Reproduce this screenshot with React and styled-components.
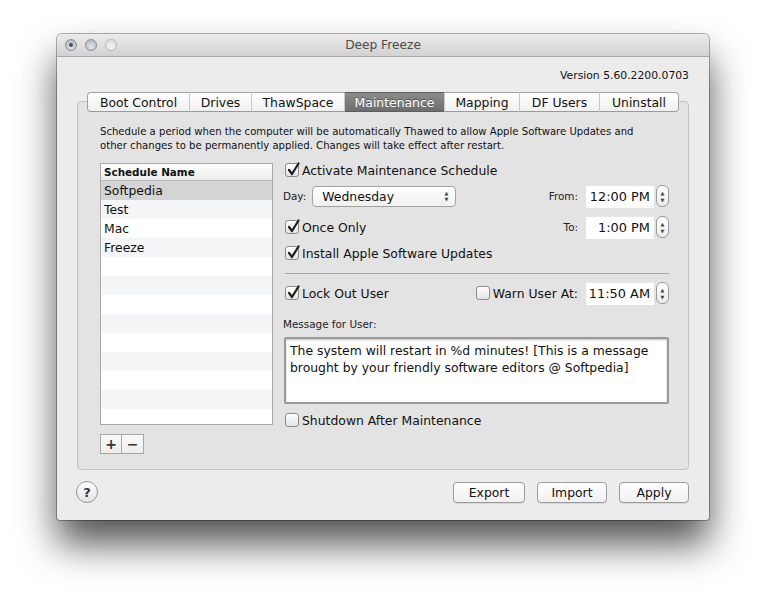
import React from "react";
import styled, { createGlobalStyle } from "styled-components";

const GlobalStyle = createGlobalStyle`
  html, body {
    margin: 0;
    padding: 0;
    background: #ffffff;
  }
  body {
    font-family: "DejaVu Sans", "Liberation Sans", sans-serif;
    color: #111;
  }
`;

const Page = styled.div`
  width: 766px;
  height: 600px;
  padding: 34px 0 0 57px;
  box-sizing: border-box;
  overflow: hidden;
`;

const Window = styled.div`
  width: 652px;
  height: 486px;
  background: #ececec;
  border-radius: 5px 5px 3px 3px;
  box-shadow: 0 0 0 1px rgba(0, 0, 0, 0.3), 0 24px 38px rgba(0, 0, 0, 0.68);
  display: flex;
  flex-direction: column;
  overflow: hidden;
`;

const TitleBar = styled.div`
  height: 22px;
  flex-shrink: 0;
  background: linear-gradient(#ebebeb, #d2d2d2);
  border-bottom: 1px solid #a8a8a8;
  display: flex;
  align-items: center;
  position: relative;
`;

const Lights = styled.div`
  display: flex;
  gap: 8px;
  padding-left: 8px;
`;

const Light = styled.span`
  width: 12px;
  height: 12px;
  border-radius: 50%;
  box-sizing: border-box;
  border: 1px solid ${(p) => (p.$faded ? "#b8b8b8" : "#8e8e94")};
  background: ${(p) =>
    p.$faded
      ? "radial-gradient(circle at 50% 70%, #f4f4f4, #d9d9d9)"
      : "radial-gradient(circle at 50% 70%, #e4e8ee, #a3aab4)"};
  display: flex;
  align-items: center;
  justify-content: center;

  &::after {
    content: "";
    width: 4px;
    height: 4px;
    border-radius: 50%;
    background: #4b4f56;
    display: ${(p) => (p.$dot ? "block" : "none")};
  }
`;

const Title = styled.div`
  position: absolute;
  left: 0;
  right: 0;
  top: 4px;
  text-align: center;
  font-size: 12.2px;
  color: #4a4a4a;
  pointer-events: none;
`;

const Body = styled.div`
  flex: 1;
  display: flex;
  flex-direction: column;
  padding: 0 20px;
`;

const VersionRow = styled.div`
  margin-top: 11px;
  height: 15px;
  line-height: 15px;
  text-align: right;
  font-size: 10.8px;
`;

const TabRow = styled.div`
  margin-top: 9px;
  margin-bottom: -11px;
  display: flex;
  justify-content: center;
  position: relative;
  z-index: 1;
`;

const Tab = styled.div`
  width: ${(p) => p.$w}px;
  height: 20px;
  box-sizing: border-box;
  display: flex;
  align-items: center;
  justify-content: center;
  font-size: 12.4px;
  border-top: 1px solid ${(p) => (p.$active ? "#5e5e5e" : "#a2a2a2")};
  border-bottom: 1px solid ${(p) => (p.$active ? "#5e5e5e" : "#9a9a9a")};
  border-left: 1px solid ${(p) => (p.$first ? "#a2a2a2" : "#c9c9c9")};
  border-right: ${(p) => (p.$last ? "1px solid #a2a2a2" : "none")};
  border-radius: ${(p) => (p.$first ? "4px 0 0 4px" : p.$last ? "0 4px 4px 0" : "0")};
  background: ${(p) =>
    p.$active
      ? "linear-gradient(#8c8c8c, #6d6d6d)"
      : "linear-gradient(#ffffff, #f0f0f0)"};
  color: ${(p) => (p.$active ? "#ffffff" : "#111")};
  text-shadow: ${(p) => (p.$active ? "0 -1px 0 rgba(0,0,0,0.35)" : "none")};
`;

const GroupBox = styled.div`
  background: #e3e3e3;
  border: 1px solid #c4c4c4;
  border-radius: 4px;
  padding: 23px 19px 15px 22px;
`;

const Intro = styled.p`
  margin: 0;
  font-size: 10.1px;
  line-height: 14px;
`;

const Main = styled.div`
  margin-top: 10px;
  display: flex;
  gap: 10px;
`;

const LeftCol = styled.div`
  display: flex;
  flex-direction: column;
  gap: 9px;
`;

const Table = styled.div`
  width: 173px;
  height: 262px;
  box-sizing: border-box;
  border: 1px solid #a9a9a9;
  background: #ffffff;
  overflow: hidden;
`;

const TableHead = styled.div`
  height: 17px;
  box-sizing: border-box;
  border-bottom: 1px solid #b9b9b9;
  background: linear-gradient(#ffffff, #ececec);
  font-size: 10.4px;
  font-weight: bold;
  padding-left: 3px;
  line-height: 16px;
`;

const TableRow = styled.div`
  height: 19px;
  line-height: 19px;
  padding-left: 3px;
  font-size: 12.4px;
  background: ${(p) => (p.$selected ? "#d4d4d4" : p.$odd ? "#f3f5f7" : "#ffffff")};
`;

const PlusMinus = styled.div`
  display: flex;
`;

const SmallButton = styled.div`
  width: 22px;
  height: 20px;
  box-sizing: border-box;
  border: 1px solid #a6a6a6;
  border-left: ${(p) => (p.$joined ? "none" : "1px solid #a6a6a6")};
  background: linear-gradient(#fbfbfb, #ececec);
  display: flex;
  align-items: center;
  justify-content: center;
  font-size: 14px;
  font-weight: bold;
  color: #333;
`;

const RightCol = styled.div`
  width: 386px;
  display: flex;
  flex-direction: column;
`;

const Row = styled.div`
  height: ${(p) => p.$h || 18}px;
  margin-top: ${(p) => p.$mt || 0}px;
  display: flex;
  align-items: center;
  font-size: 12.4px;
`;

const CheckLabel = styled.label`
  display: flex;
  align-items: center;
  gap: 3px;
  margin-left: ${(p) => (p.$auto ? "auto" : "2px")};
`;

const Box = styled.span`
  width: 14px;
  height: 14px;
  box-sizing: border-box;
  border: 1px solid #8b8b8b;
  border-radius: 3px;
  background: linear-gradient(#ffffff, #e4e4e4);
  position: relative;
  flex-shrink: 0;

  svg {
    position: absolute;
    left: 0px;
    top: -3px;
  }
`;

const SmallLabel = styled.span`
  font-size: 10.4px;
  color: #222;
`;

const Popup = styled.div`
  margin-left: 6px;
  width: 144px;
  height: 21px;
  box-sizing: border-box;
  border: 1px solid #a3a3a3;
  border-radius: 4px;
  background: linear-gradient(#ffffff, #f0f0f0);
  display: flex;
  align-items: center;
  padding: 0 7px 0 9px;
  font-size: 12.4px;
  justify-content: space-between;
`;

const Arrows = styled.span`
  display: flex;
  flex-direction: column;
  gap: 2px;
  font-size: 5px;
  line-height: 4px;
  color: #444;
`;

const TimeGroup = styled.div`
  margin-left: ${(p) => (p.$auto ? "auto" : "8px")};
  display: flex;
  align-items: center;
  gap: 8px;
`;

const TimeField = styled.div`
  width: 68px;
  height: 23px;
  box-sizing: border-box;
  background: #ffffff;
  border-top: 1px solid #e6e6e6;
  display: flex;
  align-items: center;
  justify-content: flex-end;
  padding-right: 4px;
  font-size: 12.9px;
`;

const Stepper = styled.div`
  width: 13px;
  height: 22px;
  box-sizing: border-box;
  margin-left: -6px;
  border: 1px solid #9a9a9a;
  border-radius: 6px;
  background: linear-gradient(#ffffff, #ececec);
  display: flex;
  flex-direction: column;
  align-items: center;
  justify-content: center;
  gap: 3px;
  font-size: 5px;
  line-height: 4px;
  color: #444;
`;

const Separator = styled.div`
  margin: 11px 0 0 2px;
  height: 1px;
  background: #a6a6a6;
`;

const MessageBox = styled.div`
  margin-top: 6px;
  margin-left: 1px;
  width: 385px;
  height: 67px;
  box-sizing: border-box;
  border: 2px solid #9a9a9a;
  border-radius: 2px;
  box-shadow: inset 0 1px 2px rgba(0, 0, 0, 0.25);
  background: #ffffff;
  padding: 3px 4px;
  font-size: 12.4px;
  line-height: 17px;
`;

const Footer = styled.div`
  display: flex;
  align-items: center;
  padding: 11px 0 0 0;
  margin-left: -1px;
`;

const HelpButton = styled.div`
  width: 22px;
  height: 22px;
  box-sizing: border-box;
  border-radius: 50%;
  border: 1px solid #989898;
  background: linear-gradient(#ffffff, #e4e4e4);
  display: flex;
  align-items: center;
  justify-content: center;
  font-size: 13px;
  font-weight: bold;
  color: #333;
`;

const Buttons = styled.div`
  margin-left: auto;
  display: flex;
  gap: 12px;
`;

const PushButton = styled.div`
  width: ${(p) => p.$w}px;
  height: 21px;
  box-sizing: border-box;
  border: 1px solid #9b9b9b;
  border-radius: 4px;
  background: linear-gradient(#ffffff, #f0f0f0);
  box-shadow: 0 1px 0 rgba(0, 0, 0, 0.08);
  display: flex;
  align-items: center;
  justify-content: center;
  font-size: 12.4px;
`;

const tabs = [
  { label: "Boot Control", w: 102 },
  { label: "Drives", w: 62 },
  { label: "ThawSpace", w: 93 },
  { label: "Maintenance", w: 100, active: true },
  { label: "Mapping", w: 75 },
  { label: "DF Users", w: 80 },
  { label: "Uninstall", w: 80 },
];

const schedules = ["Softpedia", "Test", "Mac", "Freeze", "", "", "", "", "", "", "", "", ""];

const Check = ({ checked, children, auto }) => (
  <CheckLabel $auto={auto}>
    <Box>
      {checked && (
        <svg width="15" height="16" viewBox="0 0 15 16">
          <path d="M3 9 L6 13 L12.5 2.5" fill="none" stroke="#1e1e1e" strokeWidth="2.2" strokeLinecap="round" strokeLinejoin="round" />
        </svg>
      )}
    </Box>
    <span>{children}</span>
  </CheckLabel>
);

const Time = ({ value }) => (
  <>
    <TimeField>{value}</TimeField>
    <Stepper>
      <span>▲</span>
      <span>▼</span>
    </Stepper>
  </>
);

export default function App() {
  return (
    <Page>
      <GlobalStyle />
      <Window>
        <TitleBar>
          <Lights>
            <Light $dot />
            <Light />
            <Light $faded />
          </Lights>
          <Title>Deep Freeze</Title>
        </TitleBar>
        <Body>
          <VersionRow>Version 5.60.2200.0703</VersionRow>
          <TabRow>
            {tabs.map((t, i) => (
              <Tab key={t.label} $w={t.w} $active={t.active} $first={i === 0} $last={i === tabs.length - 1}>
                {t.label}
              </Tab>
            ))}
          </TabRow>
          <GroupBox>
            <Intro>
              Schedule a period when the computer will be automatically Thawed to allow Apple Software Updates and
              <br />
              other changes to be permanently applied. Changes will take effect after restart.
            </Intro>
            <Main>
              <LeftCol>
                <Table>
                  <TableHead>Schedule Name</TableHead>
                  {schedules.map((s, i) => (
                    <TableRow key={i} $selected={i === 0} $odd={i % 2 === 1}>
                      {s}
                    </TableRow>
                  ))}
                </Table>
                <PlusMinus>
                  <SmallButton>+</SmallButton>
                  <SmallButton $joined>−</SmallButton>
                </PlusMinus>
              </LeftCol>
              <RightCol>
                <Row $h={18} $mt={-2}>
                  <Check checked>Activate Maintenance Schedule</Check>
                </Row>
                <Row $h={24} $mt={5}>
                  <SmallLabel>Day:</SmallLabel>
                  <Popup>
                    <span>Wednesday</span>
                    <Arrows>
                      <span>▲</span>
                      <span>▼</span>
                    </Arrows>
                  </Popup>
                  <TimeGroup $auto>
                    <SmallLabel>From:</SmallLabel>
                    <Time value="12:00 PM" />
                  </TimeGroup>
                </Row>
                <Row $h={24} $mt={7}>
                  <Check checked>Once Only</Check>
                  <TimeGroup $auto>
                    <SmallLabel>To:</SmallLabel>
                    <Time value="1:00 PM" />
                  </TimeGroup>
                </Row>
                <Row $h={18} $mt={5}>
                  <Check checked>Install Apple Software Updates</Check>
                </Row>
                <Separator />
                <Row $h={24} $mt={7}>
                  <Check checked>Lock Out User</Check>
                  <Check auto>Warn User At:</Check>
                  <TimeGroup>
                    <Time value="11:50 AM" />
                  </TimeGroup>
                </Row>
                <Row $h={14} $mt={12}>
                  <SmallLabel>Message for User:</SmallLabel>
                </Row>
                <MessageBox>
                  The system will restart in %d minutes! [This is a message brought by your friendly software editors @ Softpedia]
                </MessageBox>
                <Row $h={18} $mt={7}>
                  <Check>Shutdown After Maintenance</Check>
                </Row>
              </RightCol>
            </Main>
          </GroupBox>
          <Footer>
            <HelpButton>?</HelpButton>
            <Buttons>
              <PushButton $w={72}>Export</PushButton>
              <PushButton $w={70}>Import</PushButton>
              <PushButton $w={70}>Apply</PushButton>
            </Buttons>
          </Footer>
        </Body>
      </Window>
    </Page>
  );
}
